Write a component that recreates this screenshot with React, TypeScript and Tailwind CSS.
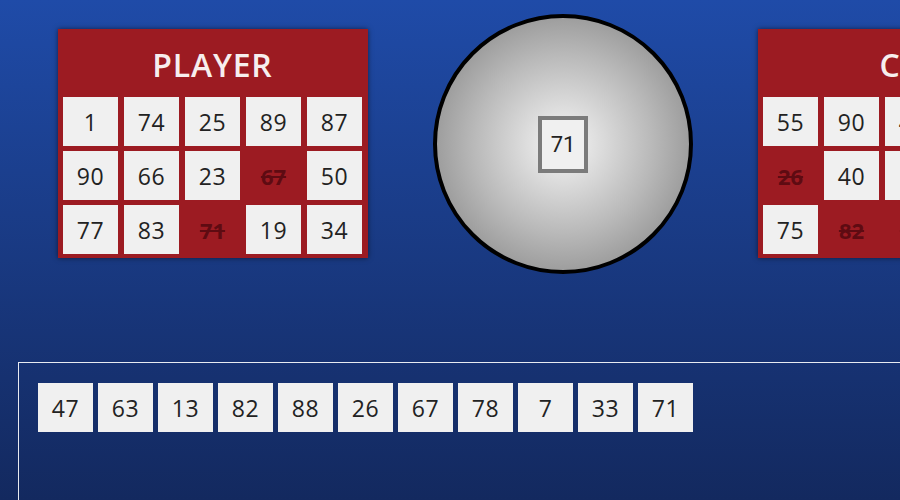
import React from "react";

type Cell = { n: number; marked?: boolean };

const player: Cell[] = [
  { n: 1 }, { n: 74 }, { n: 25 }, { n: 89 }, { n: 87 },
  { n: 90 }, { n: 66 }, { n: 23 }, { n: 67, marked: true }, { n: 50 },
  { n: 77 }, { n: 83 }, { n: 71, marked: true }, { n: 19 }, { n: 34 },
];

const computer: Cell[] = [
  { n: 55 }, { n: 90 }, { n: 43 }, { n: 12 }, { n: 68 },
  { n: 26, marked: true }, { n: 40 }, { n: 17 }, { n: 59 }, { n: 3 },
  { n: 75 }, { n: 82, marked: true }, { n: 13, marked: true }, { n: 64 }, { n: 29 },
];

const drawn = [47, 63, 13, 82, 88, 26, 67, 78, 7, 33, 71];

const font = "font-['Open_Sans','Liberation_Sans',sans-serif]";

function Card({ title, cells }: { title: string; cells: Cell[] }) {
  return (
    <div className="mt-[15px] w-[310px] shrink-0 bg-[#9c1b22] pb-[4px] pl-[5px] pr-[6px] shadow-[0_0_5px_rgba(0,0,0,0.55)]">
      <div className="flex h-[68px] items-center justify-center pt-[4px] text-[32px] font-semibold tracking-wide text-[#f7eeee]">
        {title}
      </div>
      <div className="grid grid-cols-5 gap-x-[6px] gap-y-[5px]">
        {cells.map((c, i) =>
          c.marked ? (
            <div
              key={i}
              className="flex h-[49px] items-center justify-center pt-[2px] text-[22px] font-bold text-[#5e0b12] line-through"
            >
              {c.n}
            </div>
          ) : (
            <div
              key={i}
              className="flex h-[49px] items-center justify-center pt-[2px] bg-[#f0f0f0] text-[23px] font-medium tracking-wide text-[#222]"
            >
              {c.n}
            </div>
          )
        )}
      </div>
    </div>
  );
}

export default function App() {
  return (
    <div className={`h-[500px] w-full overflow-hidden bg-gradient-to-b from-[#1f4ba8] to-[#13295f] ${font}`}>
      <div className="flex items-start gap-[65px] pl-[58px] pt-[14px]">
        <Card title="PLAYER" cells={player} />
        <div className="flex h-[260px] w-[260px] shrink-0 items-center justify-center rounded-full border-4 border-black bg-[radial-gradient(circle,#f6f6f6_0%,#b9b9b9_50%,#787878_100%)]">
          <div className="flex h-[57px] w-[50px] items-center justify-center border-4 border-[#7b7b7b] bg-[#f0f0f0] font-['Roboto',sans-serif] text-[22px] text-[#222]">
            71
          </div>
        </div>
        <Card title="CPU" cells={computer} />
      </div>
      <div className="ml-[18px] mt-[88px] h-[200px] w-[920px] border border-white/90 px-[19px] pt-[20px]">
        <div className="flex gap-[5px]">
          {drawn.map((n, i) => (
            <div
              key={i}
              className="flex h-[49px] w-[55px] items-center justify-center pt-[2px] bg-[#f0f0f0] text-[23px] font-medium tracking-wide text-[#222]"
            >
              {n}
            </div>
          ))}
        </div>
      </div>
    </div>
  );
}
